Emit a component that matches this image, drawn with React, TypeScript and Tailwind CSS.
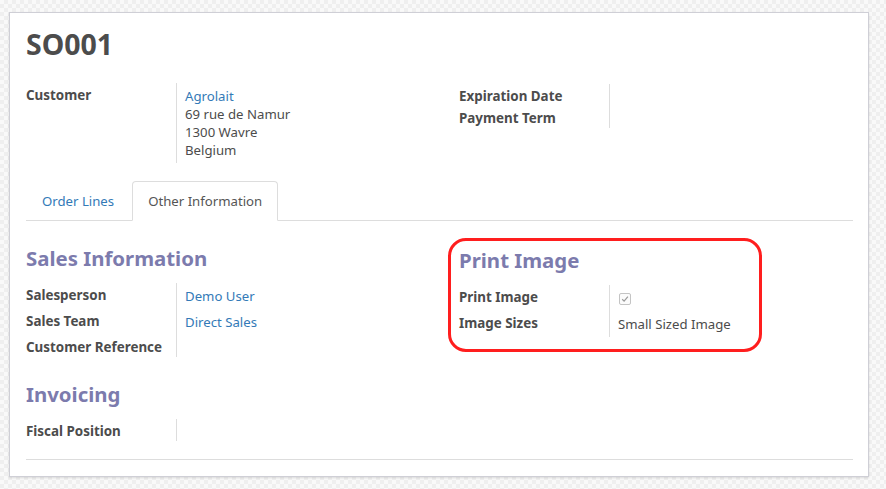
import React from "react";

const font = { fontFamily: '"Noto Sans", "DejaVu Sans", sans-serif' };

function Label({ children, last }: { children: React.ReactNode; last?: boolean }) {
  return (
    <div
      className={`w-[150px] shrink-0 pt-[3px] ${last ? "pb-[1px]" : "pb-[5px]"} text-[13.4px] leading-[18px] font-bold text-[#4c4c4c]`}
    >
      {children}
    </div>
  );
}

function Row({
  label,
  children,
  last,
  valueClass = "",
}: {
  label: string;
  children?: React.ReactNode;
  last?: boolean;
  valueClass?: string;
}) {
  return (
    <div className="flex">
      <Label last={last}>{label}</Label>
      <div
        className={`flex-1 border-l border-[#dddddd] pl-[8px] pt-[3.5px] pb-[4.5px] text-[13.2px] leading-[18px] text-[#4c4c4c] ${valueClass}`}
      >
        {children}
      </div>
    </div>
  );
}

function Heading({ children }: { children: React.ReactNode }) {
  return (
    <div className="text-[20.4px] leading-[28px] font-bold text-[#7c7bad]">{children}</div>
  );
}

export default function App() {
  return (
    <div
      style={font}
      className="w-[886px] h-[489px] overflow-hidden bg-[conic-gradient(#efefef_25%,#f9f9f9_0_50%,#efefef_0_75%,#f9f9f9_0)] bg-[length:8px_8px]"
    >
      <div className="ml-[9px] mt-[12px] w-[860px] h-[465px] bg-white border border-[#cfcfd6] shadow-[0_1px_2px_rgba(0,0,0,0.12)] pl-[16px] pr-[15px] pt-[14px]">
        <div className="text-[28.5px] leading-[34px] font-bold text-[#4c4c4c]">SO001</div>

        <div className="mt-[22px] flex">
          <div className="w-[433px] shrink-0">
            <div className="flex">
              <div className="w-[150px] shrink-0 pt-[3px] text-[13.4px] leading-[18px] font-bold text-[#4c4c4c]">
                Customer
              </div>
              <div className="flex-1 border-l border-[#dddddd] pl-[8px] pt-[3.5px] pb-[4.5px] text-[13.2px] leading-[18px] text-[#4c4c4c]">
                <div className="text-[#337ab7]">Agrolait</div>
                <div>69 rue de Namur</div>
                <div>1300 Wavre</div>
                <div>Belgium</div>
              </div>
            </div>
          </div>
          <div className="flex-1 mt-[1px]">
            <div className="flex">
              <div className="w-[150px] shrink-0 text-[13.4px] leading-[18px] font-bold text-[#4c4c4c]">
                <div className="pt-[2.5px] pb-[2px]">Expiration Date</div>
                <div className="pt-[2.5px] pb-[1px]">Payment Term</div>
              </div>
              <div className="w-[1px] h-[44px] bg-[#dddddd]" />
            </div>
          </div>
        </div>

        {/* Tabs */}
        <div className="mt-[18px] flex border-b border-[#dddddd] h-[40px] items-end text-[13.2px] leading-[18px]">
          <div className="mb-[-1px] mr-[2px] border border-transparent px-[15px] py-[10px] text-[#337ab7]">
            Order Lines
          </div>
          <div className="mb-[-1px] border border-[#dddddd] border-b-white bg-white rounded-t-[4px] px-[15px] py-[10px] text-[#555555]">
            Other Information
          </div>
        </div>

        <div className="mt-[23px] flex">
          <div className="w-[433px] shrink-0">
            <Heading>Sales Information</Heading>
            <div className="mt-[11px]">
              <Row label="Salesperson" valueClass="text-[#337ab7]">Demo User</Row>
              <Row label="Sales Team" valueClass="text-[#337ab7]">Direct Sales</Row>
              <div className="flex">
                <Label last>Customer Reference</Label>
                <div className="border-l border-[#dddddd]" />
              </div>
            </div>

            <div className="mt-[23px]">
              <Heading>Invoicing</Heading>
            </div>
            <div className="mt-[11px]">
              <div className="flex">
                <Label last>Fiscal Position</Label>
                <div className="border-l border-[#dddddd]" />
              </div>
            </div>
          </div>

          <div className="relative flex-1 mt-[2px]">
            <Heading>Print Image</Heading>
            <div className="mt-[11px]">
              <div className="flex">
                <Label>Print Image</Label>
                <div className="flex-1 border-l border-[#dddddd] pl-[9px] pt-[8px]">
                  <div className="w-[12px] h-[12px] rounded-[2px] border border-[#c4c4c4] bg-[#fbfbfb] flex items-center justify-center">
                    <svg width="8" height="8" viewBox="0 0 8 8">
                      <path d="M1.2 4.3 L3.1 6.1 L6.9 1.6" fill="none" stroke="#9a9a9a" strokeWidth="1.2" />
                    </svg>
                  </div>
                </div>
              </div>
              <Row label="Image Sizes">Small Sized Image</Row>
            </div>
            <div className="absolute left-[-11px] top-[-8px] w-[314px] h-[114px] rounded-[18px] border-[3px] border-[#ff1e1e]" />
          </div>
        </div>

        <div className="mt-[18px] border-t border-[#dddddd]" />
      </div>
    </div>
  );
}
